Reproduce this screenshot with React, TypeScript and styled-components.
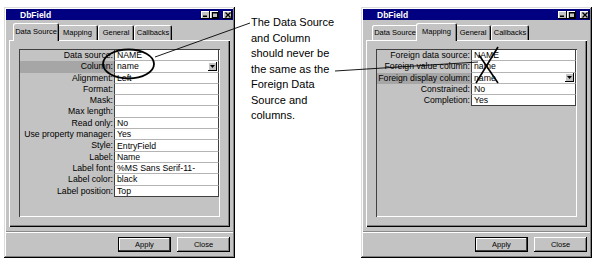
import React from "react";
import styled, { createGlobalStyle } from "styled-components";

type PropRow = { label: string; value: string; selected?: boolean; dropdown?: boolean };

const dataSourceRows: PropRow[] = [
  { label: "Data source:", value: "NAME" },
  { label: "Column:", value: "name", selected: true, dropdown: true },
  { label: "Alignment:", value: "Left" },
  { label: "Format:", value: "" },
  { label: "Mask:", value: "" },
  { label: "Max length:", value: "" },
  { label: "Read only:", value: "No" },
  { label: "Use property manager:", value: "Yes" },
  { label: "Style:", value: "EntryField" },
  { label: "Label:", value: "Name" },
  { label: "Label font:", value: "%MS Sans Serif-11-" },
  { label: "Label color:", value: "black" },
  { label: "Label position:", value: "Top" }
];

const mappingRows: PropRow[] = [
  { label: "Foreign data source:", value: "NAME" },
  { label: "Foreign value column:", value: "name" },
  { label: "Foreign display column:", value: "name", selected: true, dropdown: true },
  { label: "Constrained:", value: "No" },
  { label: "Completion:", value: "Yes" }
];

const tabs = [
  { name: "Data Source", width: 46 },
  { name: "Mapping", width: 41 },
  { name: "General", width: 36 },
  { name: "Callbacks", width: 38 }
];

const note = [
  "The Data Source",
  "and Column",
  "should never be",
  "the same as the",
  "Foreign Data",
  "Source and",
  "columns."
];

export default function App() {
  return (
    <>
      <GlobalStyle />
      <Page>
        <DbFieldWindow activeTab={0} rows={dataSourceRows} />
        <Note>
          {note.map(line => (
            <div key={line}>{line}</div>
          ))}
        </Note>
        <DbFieldWindow activeTab={1} rows={mappingRows} />
        <Markup viewBox="0 0 598 260" width={598} height={260}>
          <line x1={250} y1={23} x2={155} y2={57} stroke="#000" strokeWidth={0.9} />
          <ellipse cx={128.5} cy={64} rx={25.5} ry={14.5} fill="none" stroke="#000" strokeWidth={1.8} />
          <line x1={335} y1={71} x2={478} y2={62} stroke="#000" strokeWidth={0.9} />
          <line x1={498} y1={47} x2={476} y2={83} stroke="#000" strokeWidth={1.6} />
          <line x1={479} y1={55} x2={498} y2={83} stroke="#000" strokeWidth={1.6} />
        </Markup>
      </Page>
    </>
  );
}

function DbFieldWindow({ activeTab, rows }: { activeTab: number; rows: PropRow[] }) {
  return (
    <Window>
      <TitleBar>
        <span>DbField</span>
        <TitleButtons>
          <TitleButton>
            <svg width="5" height="5" viewBox="0 0 5 5">
              <rect x="0" y="3.5" width="4" height="1.5" fill="#000" />
            </svg>
          </TitleButton>
          <TitleButton>
            <svg width="6" height="6" viewBox="0 0 6 6">
              <rect x="0.5" y="0.5" width="5" height="5" fill="none" stroke="#000" />
              <rect x="0" y="0" width="6" height="1.5" fill="#000" />
            </svg>
          </TitleButton>
          <TitleButton $gap>
            <svg width="6" height="6" viewBox="0 0 6 6">
              <path d="M0.5 0.5 L5.5 5.5 M5.5 0.5 L0.5 5.5" stroke="#000" strokeWidth="1.3" />
            </svg>
          </TitleButton>
        </TitleButtons>
      </TitleBar>
      <Body>
        <TabStrip>
          {tabs.map((tab, index) => (
            <Tab key={tab.name} $width={tab.width} $active={index === activeTab}>
              {tab.name}
            </Tab>
          ))}
        </TabStrip>
        <Panel>
          <GroupFrame>
            <Grid>
              {rows.map(row => (
                <React.Fragment key={row.label}>
                  <Label $selected={row.selected}>{row.label}</Label>
                  <Value>
                    <span>{row.value}</span>
                    {row.dropdown && (
                      <DropButton>
                        <svg width="5" height="3" viewBox="0 0 5 3">
                          <path d="M0 0 H5 L2.5 3 Z" fill="#000" />
                        </svg>
                      </DropButton>
                    )}
                  </Value>
                </React.Fragment>
              ))}
            </Grid>
          </GroupFrame>
        </Panel>
      </Body>
      <Separator />
      <ButtonRow>
        <PushButton $default>Apply</PushButton>
        <PushButton>Close</PushButton>
      </ButtonRow>
    </Window>
  );
}

const GlobalStyle = createGlobalStyle`
  html, body {
    margin: 0;
    padding: 0;
    background: #fff;
  }
  body {
    font-family: "Liberation Sans", Arial, sans-serif;
    color: #000;
  }
`;

const Page = styled.div`
  position: relative;
  width: 598px;
  height: 260px;
  box-sizing: border-box;
  padding: 7px 0 0 4px;
  display: flex;
  align-items: flex-start;
  overflow: hidden;
`;

const Window = styled.div`
  width: 231px;
  height: 251px;
  box-sizing: border-box;
  padding: 2px;
  background: #c3c3c3;
  box-shadow: inset -1px -1px #000, inset 1px 1px #dcdcdc, inset -2px -2px #808080,
    inset 2px 2px #fff;
  display: flex;
  flex-direction: column;
`;

const TitleBar = styled.div`
  height: 11px;
  background: #000080;
  display: flex;
  align-items: center;
  justify-content: space-between;
  padding: 0 1px 0 14px;
  color: #fff;
  font-size: 8.5px;
  font-weight: bold;
`;

const TitleButtons = styled.div`
  display: flex;
  align-items: center;
`;

const TitleButton = styled.div<{ $gap?: boolean }>`
  width: 9px;
  height: 8px;
  margin-left: ${p => (p.$gap ? "4px" : "0")};
  background: #c3c3c3;
  box-shadow: inset -1px -1px #000, inset 1px 1px #fff;
  display: flex;
  align-items: center;
  justify-content: center;
`;

const Body = styled.div`
  padding: 3px 3px 0 3px;
`;

const TabStrip = styled.div`
  height: 17px;
  display: flex;
  align-items: flex-end;
  padding-left: 6px;
  position: relative;
  z-index: 1;
`;

const Tab = styled.div<{ $width: number; $active?: boolean }>`
  width: ${p => p.$width}px;
  height: ${p => (p.$active ? 18 : 15)}px;
  margin: 0 ${p => (p.$active ? -2 : 0)}px ${p => (p.$active ? -1 : 0)}px;
  box-sizing: border-box;
  background: #c3c3c3;
  border-radius: 2px 2px 0 0;
  box-shadow: inset 1px 1px #fff, inset -1px 0 #000, inset -2px 0 #808080;
  font-size: 7.5px;
  line-height: ${p => (p.$active ? 17 : 15)}px;
  text-align: center;
  white-space: nowrap;
  position: relative;
  z-index: ${p => (p.$active ? 2 : 0)};
`;

const Panel = styled.div`
  height: 187px;
  box-sizing: border-box;
  padding: 9px 10px 10px 10px;
  box-shadow: inset 1px 1px #fff, inset -1px -1px #000, inset -2px -2px #808080;
`;

const GroupFrame = styled.div`
  height: 100%;
  box-sizing: border-box;
  padding: 1px 1px 0 1px;
  box-shadow: inset 1px 1px #404040, inset -1px -1px #fff;
`;

const Grid = styled.div`
  display: grid;
  grid-template-columns: 94px 105px;
  grid-auto-rows: 11.3px;
  font-size: 8.7px;

  & > div:nth-last-child(1) {
    border-bottom-color: #404040;
  }
`;

const Label = styled.div<{ $selected?: boolean }>`
  background: ${p => (p.$selected ? "#a6a6a6" : "transparent")};
  text-align: right;
  padding-right: 1px;
  line-height: 11.3px;
  white-space: nowrap;
`;

const Value = styled.div`
  background: #fff;
  box-sizing: border-box;
  border-left: 1px solid #404040;
  border-right: 1px solid #404040;
  border-bottom: 1px solid #b4b4b4;
  padding-left: 2px;
  display: flex;
  align-items: center;
  justify-content: space-between;
  white-space: nowrap;
  line-height: 10px;
`;

const DropButton = styled.div`
  width: 9px;
  height: 9px;
  margin-right: 1px;
  background: #c3c3c3;
  box-shadow: inset -1px -1px #000, inset 1px 1px #fff;
  display: flex;
  align-items: center;
  justify-content: center;
`;

const Separator = styled.div`
  margin-top: 4px;
  height: 0;
  border-top: 1px solid #8a8a8a;
  border-bottom: 1px solid #fff;
`;

const ButtonRow = styled.div`
  display: flex;
  justify-content: flex-end;
  gap: 6px;
  padding: 4px 3px 0 3px;
`;

const PushButton = styled.div<{ $default?: boolean }>`
  width: 53px;
  height: 15px;
  box-sizing: border-box;
  background: #c3c3c3;
  font-size: 7.5px;
  line-height: 15px;
  text-align: center;
  box-shadow: ${p =>
    p.$default
      ? "inset 0 0 0 1px #000, inset -2px -2px #404040, inset 2px 2px #fff"
      : "inset -1px -1px #000, inset 1px 1px #fff, inset -2px -2px #808080"};
`;

const Note = styled.div`
  width: 126px;
  box-sizing: border-box;
  padding: 8px 0 0 16px;
  font-size: 11px;
  line-height: 15.5px;
  white-space: nowrap;
`;

const Markup = styled.svg`
  position: absolute;
  left: 0;
  top: 0;
  pointer-events: none;
`;
